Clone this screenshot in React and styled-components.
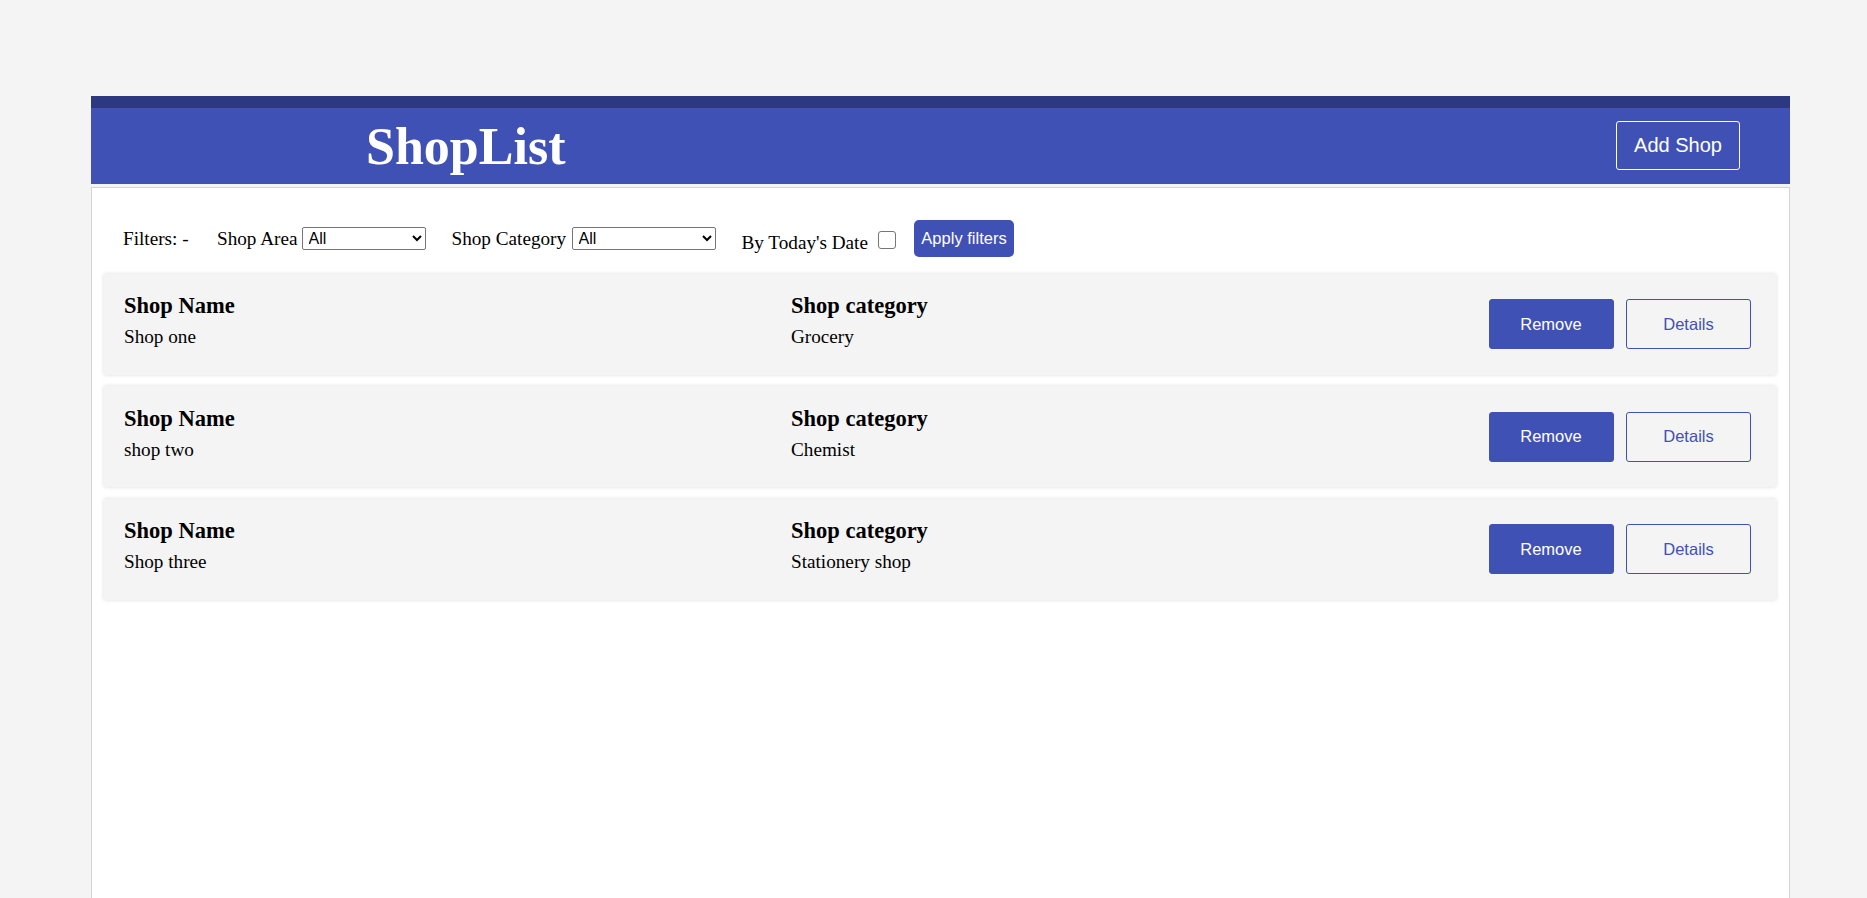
import React from "react";
import styled, { createGlobalStyle } from "styled-components";

const shops = [
  { name: "Shop one", category: "Grocery" },
  { name: "shop two", category: "Chemist" },
  { name: "Shop three", category: "Stationery shop" },
];

export default function App() {
  return (
    <>
      <GlobalStyle />
      <Page>
        <Header>
          <Title>ShopList</Title>
          <AddButton>Add Shop</AddButton>
        </Header>

        <Panel>
          <FilterBar>
            <FilterLabel w={68}>Filters: -</FilterLabel>
            <FilterGroup>
              <FilterLabel w={84.5}>Shop Area</FilterLabel>
              <Select width={124} defaultValue="All">
                <option>All</option>
              </Select>
            </FilterGroup>
            <FilterGroup>
              <FilterLabel w={120}>Shop Category</FilterLabel>
              <Select width={144} defaultValue="All">
                <option>All</option>
              </Select>
            </FilterGroup>
            <DateFilter>
              <FilterLabel w={136.5}>By Today's Date</FilterLabel>
              <Checkbox type="checkbox" />
            </DateFilter>
            <ApplyButton>Apply filters</ApplyButton>
          </FilterBar>

          <CardList>
            {shops.map((shop) => (
              <Card key={shop.name}>
                <Info>
                  <InfoTitle>Shop Name</InfoTitle>
                  <InfoValue>{shop.name}</InfoValue>
                </Info>
                <Info>
                  <InfoTitle>Shop category</InfoTitle>
                  <InfoValue>{shop.category}</InfoValue>
                </Info>
                <Actions>
                  <ActionButton primary>Remove</ActionButton>
                  <ActionButton>Details</ActionButton>
                </Actions>
              </Card>
            ))}
          </CardList>
        </Panel>
      </Page>
    </>
  );
}

const GlobalStyle = createGlobalStyle`
  html, body {
    margin: 0;
    padding: 0;
    background: #f4f4f4;
    font-family: "Liberation Serif", "Times New Roman", serif;
  }
  * { box-sizing: border-box; }
`;

const Page = styled.div`
  display: flex;
  flex-direction: column;
  min-height: 100vh;
  width: 1699px;
  margin-left: 91px;
  padding-top: 96px;
`;

const Header = styled.header`
  display: flex;
  align-items: center;
  justify-content: space-between;
  height: 88px;
  padding: 0 50px 0 275px;
  background: #3f51b5;
  border-top: 12px solid #2c3980;
`;

const Title = styled.h1`
  margin: 1px 0 0;
  font-size: 52px;
  line-height: 52px;
  font-weight: bold;
  color: #fff;
`;

const AddButton = styled.button`
  width: 124px;
  height: 49px;
  margin-top: -1px;
  padding: 0;
  background: transparent;
  border: 1px solid #fff;
  border-radius: 3px;
  color: #fff;
  font-family: "Liberation Sans", Arial, sans-serif;
  font-size: 20px;
`;

const Panel = styled.main`
  flex: 1;
  margin-top: 3px;
  background: #fff;
  border: 1px solid #d4d4d4;
  border-bottom: none;
`;

const FilterBar = styled.div`
  display: flex;
  align-items: center;
  gap: 26px;
  height: 37px;
  margin: 32px 0 0 31px;
`;

const FilterLabel = styled.span`
  flex: none;
  width: ${(p) => p.w}px;
  font-size: 19.2px;
  line-height: 22px;
  color: #000;
  white-space: nowrap;
`;

const FilterGroup = styled.div`
  display: flex;
  align-items: center;
`;

const Select = styled.select`
  width: ${(p) => p.width}px;
  height: 22.5px;
  padding: 0 2px;
  background: #fff;
  border: 1px solid #767676;
  border-radius: 2px;
  color: #000;
  font-family: "Liberation Sans", Arial, sans-serif;
  font-size: 16px;
`;

const DateFilter = styled.label`
  display: flex;
  align-items: flex-end;
  margin-top: 8px;
`;

const Checkbox = styled.input`
  appearance: none;
  flex: none;
  width: 18px;
  height: 18px;
  margin: 0 0 5px;
  background: #fff;
  border: 1px solid #767676;
  border-radius: 3px;
`;

const ApplyButton = styled.button`
  width: 100px;
  height: 37px;
  margin-left: -8px;
  padding: 0;
  background: #3f51b5;
  border: none;
  border-radius: 5px;
  color: #fff;
  font-family: "Liberation Sans", Arial, sans-serif;
  font-size: 16.5px;
`;

const CardList = styled.div`
  display: flex;
  flex-direction: column;
  gap: 11.5px;
  margin: 16.5px 13px 0 12px;
`;

const Card = styled.div`
  display: grid;
  grid-template-columns: 667px 1fr auto;
  align-items: center;
  height: 101px;
  padding: 0 25px 0 20px;
  background: #f4f4f4;
  box-shadow: 0 0 4px rgba(0, 0, 0, 0.14);
`;

const Info = styled.div`
  align-self: start;
  padding-top: 19.5px;
`;

const InfoTitle = styled.h3`
  margin: 0 0 7px;
  font-size: 22.5px;
  line-height: 26px;
  font-weight: bold;
  color: #000;
`;

const InfoValue = styled.div`
  font-size: 19.2px;
  line-height: 22px;
  color: #000;
`;

const Actions = styled.div`
  display: flex;
  gap: 12.5px;
`;

const ActionButton = styled.button`
  width: 125px;
  height: 50px;
  padding: 0;
  background: ${(p) => (p.primary ? "#3f51b5" : "transparent")};
  border: 1px solid #3f51b5;
  border-radius: 3px;
  color: ${(p) => (p.primary ? "#fff" : "#3f51b5")};
  font-family: "Liberation Sans", Arial, sans-serif;
  font-size: 16.5px;
`;
